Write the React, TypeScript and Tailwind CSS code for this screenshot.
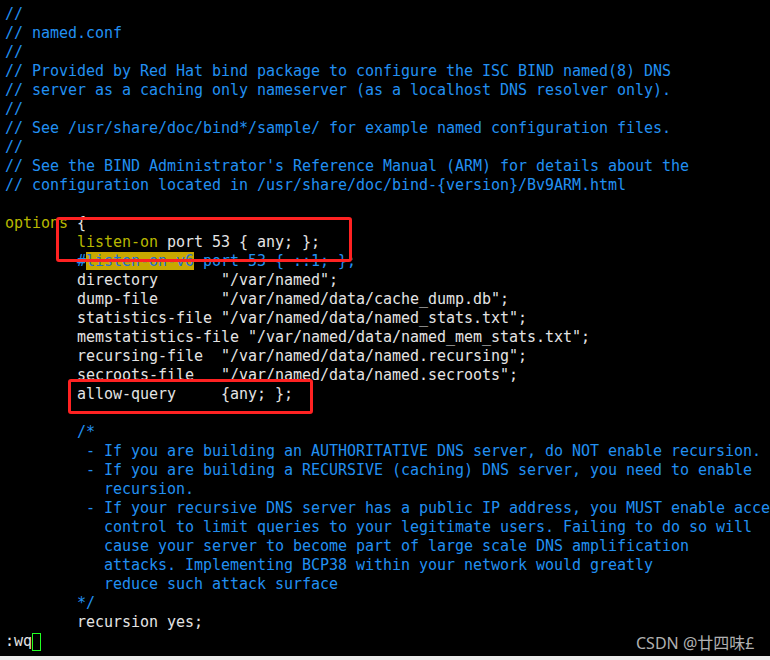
import React from "react";

const B = "text-[#2290f2]";
const W = "text-[#e4e4e4]";
const Y = "text-[#b8b800]";

const T = "        "; // tab = 8 columns

type Seg = { t: string; c?: string };

const lines: Seg[][] = [
  [{ t: "//", c: B }],
  [{ t: "// named.conf", c: B }],
  [{ t: "//", c: B }],
  [{ t: "// Provided by Red Hat bind package to configure the ISC BIND named(8) DNS", c: B }],
  [{ t: "// server as a caching only nameserver (as a localhost DNS resolver only).", c: B }],
  [{ t: "//", c: B }],
  [{ t: "// See /usr/share/doc/bind*/sample/ for example named configuration files.", c: B }],
  [{ t: "//", c: B }],
  [{ t: "// See the BIND Administrator's Reference Manual (ARM) for details about the", c: B }],
  [{ t: "// configuration located in /usr/share/doc/bind-{version}/Bv9ARM.html", c: B }],
  [{ t: " " }],
  [{ t: "options", c: Y }, { t: " {", c: W }],
  [{ t: T }, { t: "listen-on", c: Y }, { t: " port 53 { any; };", c: W }],
  [
    { t: T },
    { t: "#", c: B },
    { t: "listen-on-v6", c: "text-[#1f6fd6] bg-[#c8a800]" },
    { t: " port 53 { ::1; };", c: B },
  ],
  [{ t: T + 'directory       "/var/named";', c: W }],
  [{ t: T + 'dump-file       "/var/named/data/cache_dump.db";', c: W }],
  [{ t: T + 'statistics-file "/var/named/data/named_stats.txt";', c: W }],
  [{ t: T + 'memstatistics-file "/var/named/data/named_mem_stats.txt";', c: W }],
  [{ t: T + 'recursing-file  "/var/named/data/named.recursing";', c: W }],
  [{ t: T + 'secroots-file   "/var/named/data/named.secroots";', c: W }],
  [{ t: T + "allow-query     {any; };", c: W }],
  [{ t: " " }],
  [{ t: T + "/*", c: B }],
  [{ t: T + " - If you are building an AUTHORITATIVE DNS server, do NOT enable recursion.", c: B }],
  [{ t: T + " - If you are building a RECURSIVE (caching) DNS server, you need to enable", c: B }],
  [{ t: T + "   recursion.", c: B }],
  [{ t: T + " - If your recursive DNS server has a public IP address, you MUST enable acce", c: B }],
  [{ t: T + "   control to limit queries to your legitimate users. Failing to do so will", c: B }],
  [{ t: T + "   cause your server to become part of large scale DNS amplification", c: B }],
  [{ t: T + "   attacks. Implementing BCP38 within your network would greatly", c: B }],
  [{ t: T + "   reduce such attack surface", c: B }],
  [{ t: T + "*/", c: B }],
  [{ t: T + "recursion yes;", c: W }],
];

export default function App() {
  return (
    <div className="relative flex h-[660px] w-[770px] flex-col overflow-hidden bg-black">
      <div
        className="flex-1 overflow-hidden pl-[5px] pt-[5px] text-[15px] leading-[19px] tracking-[-0.03px]"
        style={{ fontFamily: '"DejaVu Sans Mono", monospace' }}
      >
        {lines.map((segs, i) => (
          <div key={i} className="h-[19px] whitespace-pre">
            {segs.map((s, j) => (
              <span key={j} className={s.c}>
                {s.t}
              </span>
            ))}
          </div>
        ))}
        <div className="flex h-[19px] items-center whitespace-pre">
          <span className={W}>:wq</span>
          <span className="inline-block h-[18px] w-[9px] border border-[#22ff22]" />
        </div>
      </div>
      <div className="h-[4px] bg-[#ececec]" />

      {/* red highlight boxes */}
      <div className="absolute left-[56px] top-[217px] h-[45px] w-[296px] rounded-[3px] border-[3px] border-[#ff2222]" />
      <div className="absolute left-[68px] top-[379px] h-[35px] w-[245px] rounded-[3px] border-[3px] border-[#ff2222]" />

      {/* watermark */}
      <div
        className="absolute left-[636px] top-[632px] text-[16px] leading-[22px] text-[#b0b0b0]"
        style={{ fontFamily: '"Noto Sans", "Noto Sans CJK SC", sans-serif' }}
      >
        CSDN @廿四味£
      </div>
    </div>
  );
}
